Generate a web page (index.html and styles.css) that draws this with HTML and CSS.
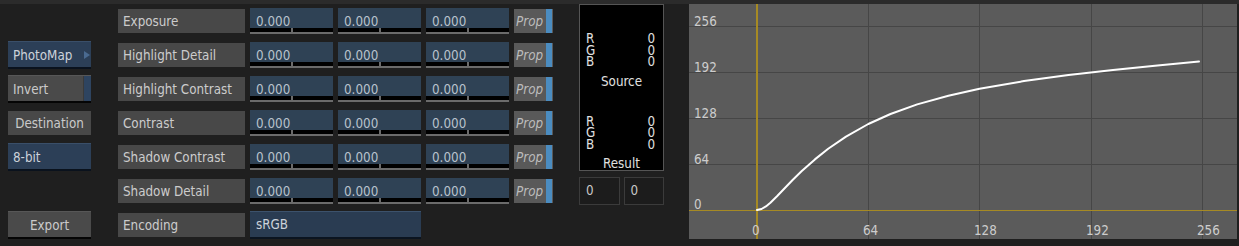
FILE: index.html
```html
<!DOCTYPE html>
<html>
<head>
<meta charset="utf-8">
<link rel="stylesheet" href="styles.css">
</head>
<body>
<div class="app">
  <div class="controls">
    <!-- row 1 -->
    <div class="slot"></div>
    <div class="label">Exposure</div>
    <div class="field"><div class="num">0.000</div><div class="bar"></div></div>
    <div class="field"><div class="num">0.000</div><div class="bar"></div></div>
    <div class="field"><div class="num">0.000</div><div class="bar"></div></div>
    <div class="prop"><span>Prop</span><i class="strip"></i></div>
    <!-- row 2 -->
    <div class="btn blue">PhotoMap<i class="tri"></i></div>
    <div class="label">Highlight Detail</div>
    <div class="field"><div class="num">0.000</div><div class="bar"></div></div>
    <div class="field"><div class="num">0.000</div><div class="bar"></div></div>
    <div class="field"><div class="num">0.000</div><div class="bar"></div></div>
    <div class="prop"><span>Prop</span><i class="strip"></i></div>
    <!-- row 3 -->
    <div class="btn gray toggle"><span>Invert</span><i class="bstrip"></i></div>
    <div class="label">Highlight Contrast</div>
    <div class="field"><div class="num">0.000</div><div class="bar"></div></div>
    <div class="field"><div class="num">0.000</div><div class="bar"></div></div>
    <div class="field"><div class="num">0.000</div><div class="bar"></div></div>
    <div class="prop"><span>Prop</span><i class="strip"></i></div>
    <!-- row 4 -->
    <div class="flat">Destination</div>
    <div class="label">Contrast</div>
    <div class="field"><div class="num">0.000</div><div class="bar"></div></div>
    <div class="field"><div class="num">0.000</div><div class="bar"></div></div>
    <div class="field"><div class="num">0.000</div><div class="bar"></div></div>
    <div class="prop"><span>Prop</span><i class="strip"></i></div>
    <!-- row 5 -->
    <div class="btn blue">8-bit</div>
    <div class="label">Shadow Contrast</div>
    <div class="field"><div class="num">0.000</div><div class="bar"></div></div>
    <div class="field"><div class="num">0.000</div><div class="bar"></div></div>
    <div class="field"><div class="num">0.000</div><div class="bar"></div></div>
    <div class="prop"><span>Prop</span><i class="strip"></i></div>
    <!-- row 6 -->
    <div class="slot"></div>
    <div class="label">Shadow Detail</div>
    <div class="field"><div class="num">0.000</div><div class="bar"></div></div>
    <div class="field"><div class="num">0.000</div><div class="bar"></div></div>
    <div class="field"><div class="num">0.000</div><div class="bar"></div></div>
    <div class="prop"><span>Prop</span><i class="strip"></i></div>
    <!-- row 7 -->
    <div class="btn gray center">Export</div>
    <div class="label">Encoding</div>
    <div class="encoding">sRGB</div>
  </div>

  <div class="meter">
    <div class="readout">
      <div class="rgb first">
        <div class="ch"><span>R</span><span>0</span></div>
        <div class="ch"><span>G</span><span>0</span></div>
        <div class="ch"><span>B</span><span>0</span></div>
      </div>
      <div class="cap">Source</div>
      <div class="rgb second">
        <div class="ch"><span>R</span><span>0</span></div>
        <div class="ch"><span>G</span><span>0</span></div>
        <div class="ch"><span>B</span><span>0</span></div>
      </div>
      <div class="cap">Result</div>
    </div>
    <div class="inputs">
      <div class="inp">0</div>
      <div class="inp">0</div>
    </div>
  </div>

  <div class="graph">
    <svg width="548" height="235" viewBox="0 0 548 235" shape-rendering="crispEdges">
      <g class="grid">
        <rect x="0" y="22" width="548" height="1"/>
        <rect x="0" y="68" width="548" height="1"/>
        <rect x="0" y="114" width="548" height="1"/>
        <rect x="0" y="160" width="548" height="1"/>
        <rect x="179" y="0" width="1" height="235"/>
        <rect x="290" y="0" width="1" height="235"/>
        <rect x="402" y="0" width="1" height="235"/>
        <rect x="513" y="0" width="1" height="235"/>
      </g>
      <g class="axis">
        <rect x="0" y="206" width="548" height="1"/>
        <rect x="67" y="0" width="2" height="235"/>
      </g>
      <g class="lbl">
        <text x="5" y="22">256</text>
        <text x="5" y="68">192</text>
        <text x="5" y="114">128</text>
        <text x="5" y="160">64</text>
        <text x="5" y="205">0</text>
        <text x="63" y="231">0</text>
        <text x="174" y="231">64</text>
        <text x="285" y="231">128</text>
        <text x="397" y="231">192</text>
        <text x="508" y="231">256</text>
      </g>
      <polyline class="curve" shape-rendering="geometricPrecision" points="68,206 72.5,205 76.9,202.4 81.4,198.7 88,192.2 94.7,185.3 103.6,176 112.5,167.3 125.9,155.4 139.2,144.8 157,132.6 179.3,120 201.5,110 228.2,100.4 259.4,91.7 290.5,84.8 335,77.1 379.5,71 424,65.9 468.5,61.4 510,57.5"/>
    </svg>
  </div>
</div>
</body>
</html>
```

FILE: styles.css
```css
html, body {
  margin: 0;
  padding: 0;
}

body {
  background: #1f1f1f;
  font-family: "DejaVu Sans Condensed", "DejaVu Sans", sans-serif;
  font-size: 13.3px;
  color: #cacaca;
  width: 1239px;
  height: 246px;
  overflow: hidden;
}

.app {
  display: flex;
  align-items: flex-start;
  border-top: 4px solid #2b2b2b;
  padding-left: 8px;
  height: 242px;
}

/* ---------- controls grid ---------- */
.controls {
  display: grid;
  grid-template-columns: 105px 127px 83px 83px 83px 39px;
  grid-template-rows: repeat(7, 34px);
  column-gap: 5px;
  align-items: center;
}

.slot {
  height: 28px;
}

.btn {
  width: 83px;
  height: 28px;
  box-sizing: border-box;
  border-top: 1px solid;
  border-bottom: 2px solid;
  padding-top: 2px;
  padding-left: 5px;
  line-height: 23px;
  white-space: nowrap;
  display: flex;
  align-items: flex-start;
}

.btn.blue {
  background: #2c3f57;
  border-top-color: #3a4f69;
  border-bottom-color: #0a121d;
  color: #ccd2da;
}

.btn.gray {
  background: #4a4a4a;
  border-top-color: #575757;
  border-bottom-color: #050505;
}

.btn.center {
  justify-content: center;
  padding-left: 0;
}

.btn.toggle span {
  flex: 1;
}

.bstrip {
  width: 7px;
  align-self: stretch;
  margin-top: -2px;
  background: #2e4460;
  border-left: 1px solid #3a3a3a;
}

.tri {
  margin-left: auto;
  margin-right: 1px;
  margin-top: 7px;
  width: 0;
  height: 0;
  border-top: 4px solid transparent;
  border-bottom: 4px solid transparent;
  border-left: 6px solid #4a6a90;
}

.flat {
  width: 83px;
  height: 24px;
  box-sizing: border-box;
  padding-top: 1px;
  background: #484848;
  line-height: 23px;
  text-align: center;
}

.label {
  height: 24px;
  box-sizing: border-box;
  padding-top: 1px;
  background: #484848;
  line-height: 23px;
  padding-left: 5px;
  white-space: nowrap;
  color: #cccccc;
}

.field {
  height: 26px;
  display: flex;
  flex-direction: column;
}

.num {
  height: 20px;
  box-sizing: border-box;
  padding-top: 5px;
  padding-left: 6px;
  line-height: 18px;
  background: #2f4255;
  color: #b9c3cd;
}

.bar {
  height: 4px;
  border-bottom: 2px solid #6b6b6b;
  background: linear-gradient(to right, #000 0, #000 41px, #6b6b6b 41px, #6b6b6b 43px, #000 43px, #000 100%);
}

.prop {
  height: 24px;
  display: flex;
  background: #595959;
  color: #bcbcbc;
}

.prop span {
  flex: 1;
  font-style: italic;
  line-height: 23px;
  padding-top: 1px;
  padding-left: 2px;
  box-sizing: border-box;
}

.strip {
  width: 6px;
  margin-right: 1px;
  background: #4b8cc0;
}

.encoding {
  grid-column: 3 / span 2;
  height: 28px;
  box-sizing: border-box;
  background: #2a3c52;
  border-top: 1px solid #3c526c;
  border-bottom: 2px solid #0b1420;
  padding-top: 1px;
  line-height: 24px;
  padding-left: 6px;
  color: #ccd2da;
}

/* ---------- meter ---------- */
.meter {
  margin-left: 26px;
  width: 85px;
  display: flex;
  flex-direction: column;
}

.readout {
  height: 167px;
  box-sizing: border-box;
  border: 1px solid #555;
  background: #000;
  padding: 28px 8px 0 6px;
  overflow: hidden;
  color: #e0e0e0;
}

.rgb .ch {
  display: flex;
  justify-content: space-between;
  line-height: 11.5px;
}

.rgb.second {
  margin-top: 26px;
}

.cap {
  margin-top: 6px;
  line-height: 16px;
  text-align: center;
  padding-left: 2px;
}

.inputs {
  margin-top: 6px;
  display: flex;
  gap: 4px;
}

.inp {
  flex: 1;
  height: 28px;
  box-sizing: border-box;
  border: 1px solid #3b3b3b;
  background: #1c1c1c;
  line-height: 26px;
  padding-left: 6px;
  color: #c8c8c8;
}

/* ---------- graph ---------- */
.graph {
  margin-left: 25px;
  width: 548px;
  height: 235px;
  background: #5b5b5b;
}

.graph svg {
  display: block;
}

.grid rect {
  fill: #464646;
}

.axis rect {
  fill: #a68a24;
}

.lbl text {
  font-family: "DejaVu Sans Condensed", "DejaVu Sans", sans-serif;
  font-size: 13.3px;
  fill: #cdcdcd;
}

.curve {
  fill: none;
  stroke: #ffffff;
  stroke-width: 2;
  stroke-linecap: round;
  stroke-linejoin: round;
}
```
